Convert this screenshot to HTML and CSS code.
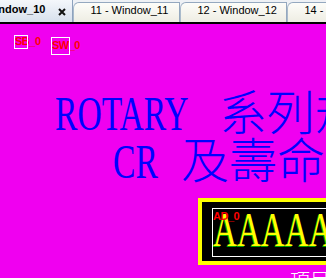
FILE: index.html
```html
<!DOCTYPE html>
<html lang="zh-Hant">
<head>
  <meta charset="UTF-8">
  <meta name="viewport" content="width=device-width, initial-scale=1.0">
  <title>Window_10</title>
  <link rel="stylesheet" href="styles.css">
</head>
<body>

  <!-- Window tabs -->
  <div class="tabbar">
    <div class="tab tab-active">
      <span class="tab-label">10 - Window_10</span>
      <svg class="tab-close" width="8" height="8" viewBox="0 0 8 8">
        <path d="M1 1 L7 7 M7 1 L1 7" stroke="#111" stroke-width="2" fill="none"/>
      </svg>
    </div>
    <div class="tab">11 - Window_11</div>
    <div class="tab">12 - Window_12</div>
    <div class="tab">14 - Window_14</div>
  </div>

  <!-- Screen canvas -->
  <main class="canvas">
    <div class="flags">
      <span class="flag flag-sb">SB_0</span>
      <span class="flag flag-sw">SW_0</span>
    </div>

    <h1 class="title">
      <span class="line line-1"><span class="latin latin-rotary">ROTARY</span>系列規格</span>
      <span class="line line-2"><span class="latin latin-cr">CR</span>及壽命測試</span>
    </h1>

    <div class="display">
      <div class="display-inner">
        <span class="display-tag">AD_0</span>
        <span class="display-value">AAAAAAAA</span>
      </div>
    </div>

    <div class="caption">項目</div>
  </main>

</body>
</html>
```

FILE: styles.css
```css
* {
  box-sizing: border-box;
}

body {
  margin: 0;
  width: 326px;
  height: 278px;
  overflow: hidden;
  background: #f000f0;
  font-family: 'Liberation Sans', Arial, sans-serif;
}

/* Tabs */
.tabbar {
  display: flex;
  align-items: flex-end;
  height: 24px;
  background: #eef1f5;
  border-bottom: 2px solid #000;
  overflow: hidden;
}

.tab {
  flex: none;
  width: 107px;
  height: 20px;
  padding: 1px 0 0 16px;
  font-size: 11px;
  line-height: 13px;
  color: #000;
  white-space: nowrap;
  background: linear-gradient(#fdfdf9, #eeede3);
  border: 1px solid #94a8bf;
  border-bottom: none;
  border-left-color: #a9bacb;
  border-top-left-radius: 6px;
}

.tab-active {
  display: flex;
  align-items: flex-start;
  width: auto;
  height: 22px;
  margin-left: -47px;
  padding: 3px 6px 0 10px;
  font-weight: bold;
  background: linear-gradient(#f4f7fb, #d7e0ec);
  border: none;
  border-right: 1px solid #8da2bd;
  border-radius: 0;
}

.tab-close {
  display: block;
  margin: 5px 0 0 13px;
}

/* Canvas */
.canvas {
  height: 254px;
  overflow: hidden;
  background: #f000f0;
}

.flags {
  display: flex;
  align-items: flex-start;
  height: 35px;
  padding: 11px 0 0 14px;
}

.flag {
  position: relative;
  padding-left: 1px;
  font-size: 11px;
  font-weight: bold;
  letter-spacing: -0.5px;
  line-height: 12px;
  color: #ff0000;
}

.flag::before {
  content: "";
  position: absolute;
  left: 0;
  top: 0;
  border: 1px solid #fff;
}

.flag-sb {
  width: 37px;
}

.flag-sb::before {
  width: 12px;
  height: 12px;
}

.flag-sw {
  margin-top: 2px;
  padding-top: 2px;
}

.flag-sw::before {
  width: 17px;
  height: 16px;
}

/* Title */
.title {
  margin: 26px 0 0;
  font-family: 'Noto Sans CJK TC', sans-serif;
  font-size: 48px;
  font-weight: 300;
  line-height: 48px;
  color: #0000ff;
  white-space: nowrap;
}

.line {
  display: block;
  height: 48px;
}

.line-1 {
  padding-left: 55px;
}

.line-2 {
  padding-left: 113px;
}

.latin {
  display: inline-block;
  font-family: 'Liberation Serif', serif;
  font-weight: normal;
  line-height: 40px;
  transform: scaleX(0.7);
  transform-origin: 0 0;
}

.latin-rotary {
  width: 164px;
}

.latin-cr {
  width: 68px;
}

/* Yellow display */
.display {
  width: 300px;
  margin: 17px 0 0 198px;
  padding: 6px 0 4px 10px;
  background: #000;
  border: 4px solid #ffff00;
}

.display-inner {
  position: relative;
  height: 49px;
  border: 1px solid #fff;
  border-right: none;
  overflow: hidden;
  white-space: nowrap;
}

.display-value {
  display: inline-block;
  margin-top: -3px;
  font-family: 'Liberation Serif', serif;
  font-size: 48px;
  line-height: 47px;
  color: #ffff00;
  text-shadow: -1px 1px 0 #00a000;
  transform: scaleX(0.69);
  transform-origin: 0 0;
}

.display-tag {
  position: absolute;
  left: 0;
  top: 1px;
  z-index: 1;
  font-size: 11px;
  font-weight: bold;
  letter-spacing: -0.5px;
  line-height: 12px;
  color: #ff0000;
}

.caption {
  margin: 5px 0 0 290px;
  font-family: 'Noto Sans CJK TC', sans-serif;
  font-size: 20px;
  font-weight: 300;
  line-height: 20px;
  color: #fff;
  white-space: nowrap;
}
```
